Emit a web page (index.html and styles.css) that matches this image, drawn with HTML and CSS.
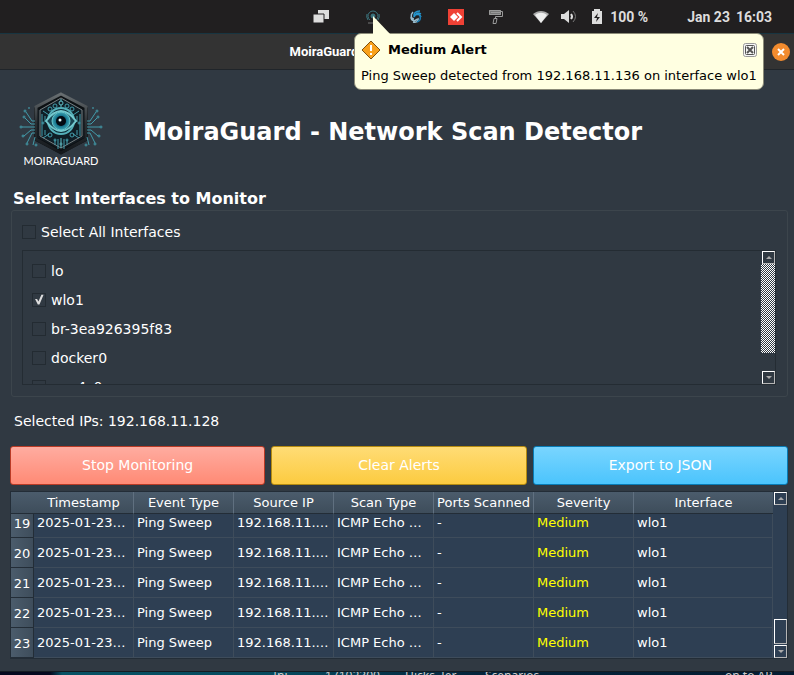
FILE: index.html
```html
<!DOCTYPE html>
<html lang="en">
<head>
<meta charset="utf-8">
<title>MoiraGuard</title>
<link rel="stylesheet" href="styles.css">
</head>
<body>
<div class="desktop">
  <header class="panel">
    <div class="tray">
      <svg class="icon" viewBox="0 0 16 16"><path d="M5 1h11v9H5z" fill="#ddd"/><path d="M0 5h11v9H0z" fill="#ddd" stroke="#211f20"/></svg>
      <svg class="icon" viewBox="0 0 16 16"><g fill="none" stroke="#3c7680"><circle cx="8" cy="7" r="2" fill="#3c7680"/><path d="M5 11a5 5 0 1 1 6 0M3 11a7 7 0 0 1-1-6M13 11a7 7 0 0 0 1-6"/><path d="M3 14h10" stroke="#777"/></g></svg>
      <svg class="icon" viewBox="0 0 16 16"><g fill="none" stroke-width="1.500"><path d="M12 2C8 2 5 4 6 8M13 5C10 3 8 4 6 8M13 8C12 5 9 5 8 6" stroke="#2496cf"/><path d="M5 3C2 6 3 10 6 10M3 8c0 4 4 5 6 2M5 13c3 1 6-1 5-4" stroke="#9abdce"/><path d="M9 13c3-1 4-3 3-6" stroke="#197db5"/></g></svg>
      <svg class="icon" viewBox="0 0 16 16"><path d="M0 0h16v16H0z" fill="#ef4135"/><path d="M6 4l4 4-4 4-4-4z" fill="#fff"/><path d="M9 4l4 4-4 4" fill="none" stroke="#fff" stroke-width="2"/></svg>
      <svg class="icon" viewBox="0 0 16 16"><path d="M1 1h12v5H1z" fill="#777"/><g fill="none" stroke="#999"><path d="M1.500 1.500h11v4h-11zM3 3.500h9M13 2.500h1.500v5h-7v2M6 9.500h3l-1 5H5z"/></g></svg>
      <svg class="icon" viewBox="0 0 16 16"><path d="M0 5C5 1 11 1 16 5L8 14z" fill="#aaa"/><path d="M2 6c4-3 8-3 12 0l-6 8z" fill="#eee"/></svg>
      <svg class="icon" viewBox="0 0 16 16"><path d="M0 5h3l5-4v13l-5-4H0z" fill="#ddd"/><path d="M10 5q2 2.500 0 5" fill="none" stroke="#ddd" stroke-width="2"/><path d="M12 2q5 5.500 0 11" fill="none" stroke="#777"/></svg>
      <svg class="icon" viewBox="0 0 16 16"><path d="M5 0h6v2h2v13H3V2h2z" fill="#ddd"/><path d="M9 4L5 9h3l-1 4 4-5H8z" fill="#211f20"/></svg>
    </div>
    <span class="battery">100 %</span>
    <time class="clock"><span>Jan 23</span><span>16:03</span></time>
  </header>

  <main class="window">
    <div class="titlebar">
      <span class="window-title">MoiraGuard - Network Scan Detector</span>
      <button class="close" aria-label="Close window"><svg viewBox="0 0 18 18"><circle cx="9" cy="9" r="9" fill="#f28b2e"/><path d="M6 6l6 6M12 6l-6 6" stroke="#fff" stroke-width="2"/></svg></button>
    </div>

    <div class="content">
      <div class="brand">
        <svg class="logo" viewBox="0 0 84 76" role="img" aria-label="MoiraGuard logo">
          <defs>
            <linearGradient id="rim" x2="0" y2="1"><stop offset="0" stop-color="#686e71"/><stop offset=".5" stop-color="#292e32"/><stop offset="1" stop-color="#15191d"/></linearGradient>
            <radialGradient id="iris"><stop offset="0" stop-color="#000"/><stop offset=".3" stop-color="#06202c"/><stop offset=".6" stop-color="#16718a"/><stop offset="1" stop-color="#41a9b7"/></radialGradient>
            <g id="circuit" fill="none" stroke="#439cab">
              <path d="M16 29h-3L7 20M16 32h-4l-6-6M16 35H3M16 38h-4l-7 6M16 41h-3l-5 10M16 45l-2 8"/>
              <circle cx="6" cy="19" r="1"/><circle cx="5" cy="25" r="1"/><circle cx="2" cy="35" r="1"/><circle cx="4" cy="44" r="1"/><circle cx="8" cy="52" r="1"/><circle cx="17" cy="53" r="1"/><circle cx="10" cy="16" r="0.500"/>
              <path d="M23 22v22M26 24v6M26 38v5M24 46l6-4M36 48v5M39 47v10M24 19l6 4"/>
              <circle cx="31" cy="43" r="2"/><circle cx="36" cy="48" r="1"/><circle cx="31" cy="17" r="2"/><circle cx="36" cy="14" r="2"/><circle cx="24" cy="31" r="1"/>
            </g>
          </defs>
          <path d="M42 3l25 14v30L42 60 17 47V17z" fill="#131b21" stroke="#0c1013" stroke-width="4"/>
          <path d="M42 2l25 13v32L42 61 17 47V15z" fill="none" stroke="url(#rim)" stroke-width="3"/>
          <path d="M42 6l21 12v26L42 56 21 44V18z" fill="#101e26" stroke="#777e80"/>
          <use href="#circuit"/><use href="#circuit" transform="translate(84 0) scale(-1 1)"/>
          <path d="M42 7v8M42 46v10" stroke="#63bec6"/><circle cx="42" cy="11" r="2" fill="#101e26" stroke="#63bec6"/><circle cx="42" cy="52" r="1" fill="#101e26" stroke="#63bec6"/>
          <circle cx="42" cy="29" r="13" fill="#0d2b36" stroke="#54afb9" stroke-width="2"/>
          <path d="M27 29q15-20 30 0-15 20-30 0z" fill="#184553" stroke="#72c8ce" stroke-width="2"/>
          <circle cx="42" cy="29" r="9" fill="url(#iris)" stroke="#69c4cc"/><circle cx="42" cy="29" r="5" fill="#030a12"/><circle cx="41" cy="28" r="1.500" fill="#eaffff"/>
          <text class="logo-text" x="42" y="73" text-anchor="middle">MOIRAGUARD</text>
        </svg>
        <h1>MoiraGuard - Network Scan Detector</h1>
      </div>

      <h2>Select Interfaces to Monitor</h2>
      <section class="group">
        <label class="check"><input type="checkbox">Select All Interfaces</label>
        <div class="list-frame">
          <div class="list">
            <label class="check"><input type="checkbox">lo</label>
            <label class="check"><input type="checkbox" checked>wlo1</label>
            <label class="check"><input type="checkbox">br-3ea926395f83</label>
            <label class="check"><input type="checkbox">docker0</label>
            <label class="check"><input type="checkbox">enp4s0</label>
          </div>
          <div class="scroll">
            <button class="step" aria-label="Scroll interfaces up"><svg viewBox="0 0 6 3"><path d="M0 3l3-3 3 3z"/></svg></button>
            <div class="hatch"></div>
            <button class="step last" aria-label="Scroll interfaces down"><svg viewBox="0 0 6 3"><path d="M0 0l3 3 3-3z"/></svg></button>
          </div>
        </div>
      </section>

      <p class="ips">Selected IPs: 192.168.11.128</p>

      <div class="actions">
        <button class="action stop">Stop Monitoring</button>
        <button class="action clear">Clear Alerts</button>
        <button class="action export">Export to JSON</button>
      </div>

      <div class="alerts">
        <table>
          <colgroup><col class="num"><col class="mid"><col class="mid"><col class="mid"><col class="mid"><col class="mid"><col class="mid"><col></colgroup>
          <thead><tr><td></td><th>Timestamp</th><th>Event Type</th><th>Source IP</th><th>Scan Type</th><th>Ports Scanned</th><th>Severity</th><th>Interface</th></tr></thead>
          <tbody>
            <tr class="partial"><th>19</th><td>2025-01-23…</td><td>Ping Sweep</td><td>192.168.11.…</td><td>ICMP Echo …</td><td>-</td><td class="medium">Medium</td><td>wlo1</td></tr>
            <tr><th>20</th><td>2025-01-23…</td><td>Ping Sweep</td><td>192.168.11.…</td><td>ICMP Echo …</td><td>-</td><td class="medium">Medium</td><td>wlo1</td></tr>
            <tr><th>21</th><td>2025-01-23…</td><td>Ping Sweep</td><td>192.168.11.…</td><td>ICMP Echo …</td><td>-</td><td class="medium">Medium</td><td>wlo1</td></tr>
            <tr><th>22</th><td>2025-01-23…</td><td>Ping Sweep</td><td>192.168.11.…</td><td>ICMP Echo …</td><td>-</td><td class="medium">Medium</td><td>wlo1</td></tr>
            <tr><th>23</th><td>2025-01-23…</td><td>Ping Sweep</td><td>192.168.11.…</td><td>ICMP Echo …</td><td>-</td><td class="medium">Medium</td><td>wlo1</td></tr>
          </tbody>
        </table>
        <div class="scroll">
          <button class="step" aria-label="Scroll alerts up"><svg viewBox="0 0 6 3"><path d="M0 3l3-3 3 3z"/></svg></button>
          <div class="thumb"></div>
          <button class="step" aria-label="Scroll alerts down"><svg viewBox="0 0 6 3"><path d="M0 0l3 3 3-3z"/></svg></button>
        </div>
      </div>
    </div>
  </main>

  <footer class="behind"><span></span><span>Ini</span><span>17102300</span><span>Hicks_Jer</span><span>Scenarios</span><span>on to AP</span></footer>

  <aside class="toast" role="alert">
    <svg class="tail" viewBox="0 0 19 19"><path d="M1 0v19h18z" fill="#ffffe1"/></svg>
    <div class="toast-head">
      <svg class="warn" viewBox="0 0 20 20"><path d="M10 1l9 9-9 9-9-9z" fill="#f9a11b" stroke="#80500c"/><path d="M10 5v6M10 13v2" stroke="#fff" stroke-width="2"/></svg>
      <strong>Medium Alert</strong>
      <button class="dismiss" aria-label="Dismiss alert"><svg viewBox="0 0 14 14"><rect x="0.500" y="0.500" width="13" height="13" rx="2" fill="#f5f5f5" stroke="#999"/><rect x="2.500" y="2.500" width="9" height="9" rx="1" fill="none" stroke="#555"/><path d="M4 4l6 6M10 4l-6 6" stroke="#555" stroke-width="2"/></svg></button>
    </div>
    <p>Ping Sweep detected from 192.168.11.136 on interface wlo1</p>
  </aside>
</div>
</body>
</html>
```
FILE: styles.css
```css
* { box-sizing: border-box; }
body {
  margin: 0;
  background: #303942;
  color: #fff;
  font: 14px/16px "DejaVu Sans", sans-serif;
}
h1, h2, p { margin: 0; }
button { font: inherit; color: inherit; padding: 0; border: 0; background: none; }
svg { display: block; }
.desktop { position: relative; height: 100vh; overflow: hidden; }

.panel {
  display: flex;
  align-items: center;
  justify-content: flex-end;
  height: 33px;
  padding-right: 22px;
  background: #211f20;
  color: #ddd;
  font: 700 14px/16px Roboto, sans-serif;
}
.tray { display: flex; gap: 12px; }
.icon { width: 16px; height: 16px; }
.tray .icon:nth-child(-n+4) { margin-right: 12px; }
.tray .icon:nth-child(1) { margin-right: 24px; }
.tray .icon:nth-child(2) { margin-right: 15px; }
.tray .icon:nth-child(5) { margin-right: 17px; }
.battery { margin-left: 5px; }
.clock { display: flex; gap: 6px; margin-left: 39px; }

.window { border-top: 1px solid #183541; background: #303942; }
.titlebar {
  display: flex;
  align-items: center;
  height: 36px;
  padding: 0 4px 0 22px;
  background: #333;
  border-bottom: 1px solid #20252a;
  font: 700 13px/16px Roboto, sans-serif;
}
.window-title { flex: 1; text-align: center; }
.close svg { width: 18px; height: 18px; }
.content { padding: 22px 6px 12px 10px; }

.brand { display: flex; align-items: center; height: 80px; padding-left: 9px; }
.logo { align-self: flex-start; width: 84px; height: 76px; }
.logo-text { fill: #fff; font: 11px/11px Lato, sans-serif; }
h1 { flex: 1; margin-right: 106px; text-align: center; font-size: 24px; line-height: 28px; }
h2 { margin: 17px 0 1px 3px; font-size: 16px; line-height: 20px; }

.group { padding: 10px 11px 11px 10px; margin-left: 1px; border: 1px solid #3c454c; border-radius: 3px; }
.check { display: flex; align-items: center; gap: 5px; height: 21px; }
.check input {
  appearance: none;
  width: 14px;
  height: 14px;
  margin: 0;
  border: 1px solid #232b32;
}
.check input:checked::before {
  content: "";
  display: block;
  width: 12px;
  height: 12px;
  background: #ddd;
  clip-path: polygon(17% 45%, 34% 45%, 45% 66%, 70% 10%, 88% 10%, 54% 92%, 40% 92%);
}
.list-frame { display: flex; height: 135px; margin-top: 8px; border: 1px solid #242c33; overflow: hidden; }
.list { flex: 1; display: flex; flex-direction: column; gap: 8px; padding: 9px; }
.list .check { flex: none; }
.scroll { display: flex; flex-direction: column; width: 14px; }
.step, .thumb { width: 13px; height: 13px; margin-left: 1px; border: 1px solid #fff; border-right: 1px solid #b5b5b5; border-bottom: 1px solid #b5b5b5; }
.step svg { width: 6px; height: 3px; margin: auto; fill: #aaa; }
.scroll .last { margin-top: auto; }
.hatch { height: 89px; background: repeating-conic-gradient(#fff 0 25%, #303942 0 50%) 0 0 / 2px 2px; }

.ips { margin: 16px 4px 17px; }
.actions { display: grid; grid-template-columns: repeat(3, 1fr); gap: 6px; }
.action { height: 39px; padding-bottom: 2px; border: 1px solid; border-radius: 3px; }
.stop { background: linear-gradient(#ffaca0, #ff8a75); border-color: #b93b26; }
.clear { background: linear-gradient(#ffdc75, #fccb40); border-color: #b58b10; }
.export { background: linear-gradient(#79d5ff, #4bc4fc); border-color: #087cb6; }

.alerts { display: flex; margin-top: 6px; border: 1px solid #232d37; background: #2e3f53; font-size: 13px; }
table { flex: 1; min-width: 0; width: 100%; table-layout: fixed; border-collapse: separate; border-spacing: 0; }
col.num { width: 23px; }
col.mid { width: 100px; }
th, td { padding: 0; height: 30px; font-weight: 400; white-space: nowrap; }
thead th, thead td { height: 22px; background: linear-gradient(#4b5c6c, #3e4d5b); border-bottom: 1px solid #232d37; border-right: 1px solid #607080; }
thead td, thead th:last-child { border-right: 0; }
tbody td { padding: 0 3px 6px 3px; vertical-align: bottom; border-right: 1px solid #3e4c5b; border-bottom: 1px solid #3e4c5b; }
tbody th { padding-bottom: 5px; vertical-align: bottom; background: linear-gradient(90deg, #4b5c6c, #3e4d5b); border-right: 1px solid #232d37; border-bottom: 1px solid #232d37; }
.partial th, .partial td { height: 24px; }
.medium { color: #ff0; }
.thumb { height: 25px; margin-top: auto; margin-bottom: 1px; }

.behind {
  display: grid;
  grid-template-columns: 273px 52px 80px 80px 1fr 69px;
  height: 16px;
  overflow: hidden;
  border-top: 1px solid #151c22;
  background: linear-gradient(90deg, #05091f 0 50px, #075365 62px, #064a5e 35%, #04243b 60%, #031c31);
  color: #ccc;
  font: 12px/8px "Noto Sans", sans-serif;
}

.toast {
  position: absolute;
  top: 33px;
  right: 30px;
  width: 410px;
  height: 57px;
  padding: 7px 6px;
  border: 1px solid #8b8b78;
  border-radius: 7px;
  background: #ffffe1;
  color: #000;
  font-size: 13px;
}
.tail { position: absolute; left: 17px; top: -18px; width: 19px; height: 19px; }
.toast-head { display: flex; align-items: center; height: 18px; gap: 7px; }
.toast-head strong { flex: 1; }
.warn { width: 20px; height: 20px; }
.dismiss svg { width: 14px; height: 14px; }
.toast p { margin-top: 9px; white-space: nowrap; }
```
